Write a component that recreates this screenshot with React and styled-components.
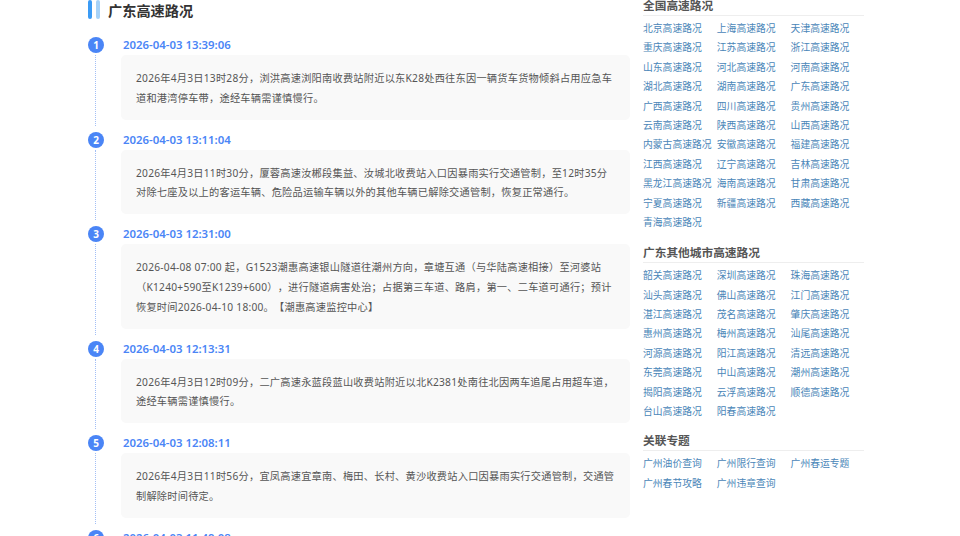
import React from 'react';
import styled, { createGlobalStyle } from 'styled-components';

const GlobalStyle = createGlobalStyle`
  html, body {
    margin: 0;
    padding: 0;
    height: 536px;
    overflow: hidden;
    background: #fff;
    font-family: "Noto Sans", "Noto Sans CJK SC", sans-serif;
  }
`;

const Page = styled.div`
  display: flex;
  align-items: flex-start;
  width: 776px;
  margin-left: 88px;
  height: 536px;
  overflow: hidden;
`;

const Main = styled.div`
  width: 542px;
  flex: none;
`;

const Title = styled.div`
  display: flex;
  align-items: center;
  height: 19px;
  font-size: 14.2px;
  font-weight: 700;
  color: #333;
  margin-bottom: 16px;
`;

const TitleBars = styled.span`
  display: flex;
  gap: 4px;
  margin-right: 8px;

  &::before, &::after {
    content: '';
    width: 4px;
    height: 19px;
    border-radius: 2px;
  }
  &::before { background: #3b9bf5; }
  &::after { background: #a6d2f8; }
`;

const Item = styled.div`
  position: relative;
  padding-left: 33px;
  padding-bottom: 10px;
`;

const Line = styled.i`
  position: absolute;
  left: 7px;
  top: 20px;
  bottom: 4px;
  border-left: 1px dotted #a3bff5;
`;

const Badge = styled.span`
  position: absolute;
  left: 0;
  top: 2px;
  width: 16px;
  height: 16px;
  border-radius: 50%;
  background: #4a85f6;
  color: #fff;
  font-size: 10px;
  font-weight: 700;
  line-height: 16px;
  text-align: center;
`;

const Time = styled.div`
  margin-left: 2px;
  height: 20px;
  line-height: 20px;
  font-size: 11.4px;
  font-weight: 600;
  color: #4a85f6;
`;

const Card = styled.div`
  background: #f9f9f9;
  border-radius: 5px;
  padding: 14px 15px 11px;
  font-size: 10.2px;
  letter-spacing: 0.25px;
  line-height: 19.8px;
  color: #555;
  text-spacing-trim: space-all;
`;

const Side = styled.div`
  width: 221px;
  flex: none;
  margin-left: 13px;
  margin-top: -4px;
`;

const SideTitle = styled.div`
  height: 19px;
  line-height: 19px;
  font-size: 11.7px;
  font-weight: 700;
  color: #555;
  border-bottom: 1px solid #eee;
  margin-top: ${p => p.$gap || 0}px;
`;

const LinkGrid = styled.div`
  display: grid;
  grid-template-columns: repeat(3, 73.8px);
  grid-auto-rows: 19.4px;
  padding-top: 3px;
`;

const SideLink = styled.a`
  font-size: 9.8px;
  line-height: 19.4px;
  color: #4a86b8;
  white-space: nowrap;
`;

const news = [
  { time: '2026-04-03 13:39:06', text: '2026年4月3日13时28分，浏洪高速浏阳南收费站附近以东K28处西往东因一辆货车货物倾斜占用应急车道和港湾停车带，途经车辆需谨慎慢行。' },
  { time: '2026-04-03 13:11:04', text: '2026年4月3日11时30分，厦蓉高速汝郴段集益、汝城北收费站入口因暴雨实行交通管制，至12时35分对除七座及以上的客运车辆、危险品运输车辆以外的其他车辆已解除交通管制，恢复正常通行。' },
  { time: '2026-04-03 12:31:00', text: '2026-04-08 07:00 起，G1523潮惠高速银山隧道往潮州方向，章塘互通（与华陆高速相接）至河婆站（K1240+590至K1239+600），进行隧道病害处治；占据第三车道、路肩，第一、二车道可通行；预计恢复时间2026-04-10 18:00。【潮惠高速监控中心】' },
  { time: '2026-04-03 12:13:31', text: '2026年4月3日12时09分，二广高速永蓝段蓝山收费站附近以北K2381处南往北因两车追尾占用超车道，途经车辆需谨慎慢行。' },
  { time: '2026-04-03 12:08:11', text: '2026年4月3日11时56分，宜凤高速宜章南、梅田、长村、黄沙收费站入口因暴雨实行交通管制，交通管制解除时间待定。' },
  { time: '2026-04-03 11:49:08', text: '' },
];

const provinces = ['北京', '上海', '天津', '重庆', '江苏', '浙江', '山东', '河北', '河南', '湖北', '湖南', '广东', '广西', '四川', '贵州', '云南', '陕西', '山西', '内蒙古', '安徽', '福建', '江西', '辽宁', '吉林', '黑龙江', '海南', '甘肃', '宁夏', '新疆', '西藏', '青海'];
const cities = ['韶关', '深圳', '珠海', '汕头', '佛山', '江门', '湛江', '茂名', '肇庆', '惠州', '梅州', '汕尾', '河源', '阳江', '清远', '东莞', '中山', '潮州', '揭阳', '云浮', '顺德', '台山', '阳春'];
const topics = ['广州油价查询', '广州限行查询', '广州春运专题', '广州春节攻略', '广州违章查询'];

function App() {
  return (
    <>
      <GlobalStyle />
      <Page>
        <Main>
          <Title><TitleBars />广东高速路况</Title>
          {news.map((item, index) => (
            <Item key={item.time}>
              <Badge>{index + 1}</Badge>
              <Line />
              <Time>{item.time}</Time>
              {item.text && <Card>{item.text}</Card>}
            </Item>
          ))}
        </Main>
        <Side>
          <SideTitle>全国高速路况</SideTitle>
          <LinkGrid>
            {provinces.map(name => <SideLink key={name}>{name}高速路况</SideLink>)}
          </LinkGrid>
          <SideTitle $gap={11}>广东其他城市高速路况</SideTitle>
          <LinkGrid>
            {cities.map(name => <SideLink key={name}>{name}高速路况</SideLink>)}
          </LinkGrid>
          <SideTitle $gap={10}>关联专题</SideTitle>
          <LinkGrid>
            {topics.map(name => <SideLink key={name}>{name}</SideLink>)}
          </LinkGrid>
        </Side>
      </Page>
    </>
  );
}

export default App;
